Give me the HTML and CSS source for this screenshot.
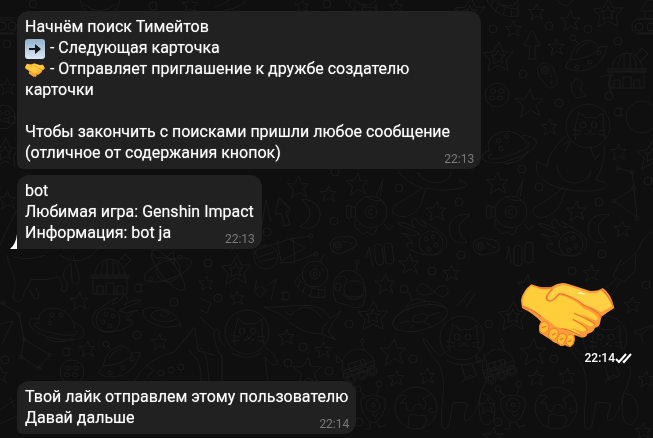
FILE: index.html
```html
<!DOCTYPE html>
<html lang="ru">
<head>
<meta charset="utf-8">
<meta name="viewport" content="width=device-width, initial-scale=1">
<title>bot</title>
<link rel="stylesheet" href="styles.css">
</head>
<body>
<svg class="wallpaper" viewBox="0 0 653 438" preserveAspectRatio="xMinYMin slice" aria-hidden="true">
  <defs>
    <path id="s" vector-effect="non-scaling-stroke" d="M1-10L3-3 10-3 5 2 8 9 1 5-6 10-4 2-10-3-3-3Z"/>
    <g id="d"><path d="M1-15L5-5 15-5 8 3 10 13 0 8-10 14-8 3-15-4-5-5Z"/><path d="M0-7L2-2 7-2 3 1 5 6 0 4-5 7-4 1-7-2-2-2Z"/></g>
    <circle id="c" r="4"/>
    <g id="ufo"><path d="M-15 5Q-12-12 2-15Q12-14 14-6Q4 4-15 5ZM-15 5L-20 12Q-10 19 5 14Q20 6 22-9L14-8M-9-2Q-5-11 4-12"/><circle cx="-8" cy="12" r="2"/><circle cx="5" cy="7" r="2"/><circle cx="14" cy="-2" r="2"/><circle cx="-12" cy="-17" r="3"/><path d="M-10-15L-6-11"/></g>
    <g id="obs"><path d="M-17 2H17V19H-17ZM-19 0H19V3H-19ZM-15 0C-14-21 14-21 15 0M-9 0C-9-9-6-16 0-16C6-16 9-9 9 0M-3 0V-16M3 0V-16M-13 19V11H-7V19M-4 19V8H4V19M7 19V11H13V19M8-13L15-21 21-15 14-8"/></g>
    <g id="bean"><path d="M-8-10C-1-16 7-8 7-1C12 6 8 12 3 13C-2 13-3 7-8 3C-12-1-11-7-8-10Z"/><circle cx="-3" cy="-5" r="4"/><circle cx="-3" cy="-5" r="2"/><path d="M4-1Q1 1 4 3M4 5Q1 7 4 9"/></g>
    <g id="moonrock"><circle r="12"/><ellipse cx="-4" cy="-4" rx="3" ry="2"/><ellipse cx="4" cy="-4" rx="3" ry="2"/><ellipse cx="-5" cy="3" rx="3" ry="2"/><ellipse cx="3" cy="3" rx="3" ry="2"/></g>
    <g id="cat"><circle r="22"/><path d="M-12 14C-15 4-11-5-9-14L-2-8Q3-9 8-8L15-13Q14 1 17 13"/><circle cx="-5" cy="-1" r="3"/><circle cx="6" cy="-1" r="3"/><path d="M0 4L2 6 4 4M2 6Q-1 10-3 7M2 6Q5 10 7 7M-7 5L-16 3M-7 8L-16 9M10 5L18 4M10 8L18 10"/></g>
    <g id="standing"><use href="#cat"/><path d="M-18 14Q-21 24-35 3Q-41-2-37 6Q-31 18-22 28C-14 50-23 67-20 89Q-16 94-13 87L-9 65Q2 63 6 67Q-1 83 5 83Q14 78 19 55Q31 33 21 15M-15 23Q2 31 19 22M-1 26L4 42 15 37 10 26M0 45Q2 39 10 37M18 58C13 96 32 91 33 74C33 61 26 55 18 55"/></g>
    <g id="planet"><path d="M-18-3C-19-20 15-20 18 6M-18-4C-37-7-27 12-3 15C22 21 35 13 22 2L18-1M-17 0C-29-1-20 8-3 10C13 15 25 11 18 7M-12 15Q4 23 16 15"/><circle cx="-5" cy="-8" r="2"/><circle cx="4" cy="-8" r="2"/><circle cx="-7" cy="0" r="2"/></g>
    <g id="robot"><circle r="16"/><circle r="6"/><path d="M2-2Q-3-3-3 1Q0 4 2 2M-16-5H-20V5H-16M-20-6H-25L-24 6H-20M5-16L12-32 9-15M-6-16Q5-9 11-12M-15 7Q-19 16-12 18Q-10 24-4 20Q3 27 6 16M13 12L18 18 22 14"/></g>
    <g id="comet"><path d="M-5-7C-17-14-24-14-27-18C-17-19-13-14-10-13Q-17-20-10-23Q-4-14 2-14Q0-19-4-21Q12-12 18-7C26 2 20 12 9 14C-5 15-21 8-18 2L-12 2Q-19-7-24-8L-13-5Z"/><circle cx="6" cy="2" r="12"/><circle cx="1" cy="-2" r="2"/><circle cx="8" cy="-4" r="2"/><circle cx="11" cy="4" r="2"/><circle cx="4" cy="8" r="2"/></g>
    <path id="moon" d="M11-14C-18-19-15 20 8 13Q-9-2 11-14Z"/>
    <path id="arrow" d="M0-15L8 0 3 1 3 14-3 14-2 1-8 0Z"/>
    <g id="helmet"><path d="M-15 10C-22-22 16-25 17 7L14 20Q5 24-2 19L-13 16Z"/><rect x="-5" y="-5" width="20" height="16" rx="7"/><ellipse cx="-11" cy="1" rx="3" ry="4"/><path d="M8-15V-22M-6 8Q3 19 15 9M-14-8Q-3-13-2-5"/><circle cx="8" cy="-24" r="2"/></g>
    <g id="alien"><circle r="13"/><circle r="5"/><circle r="2"/><path d="M-12-2L-21 8Q-9 27 10 23L10 12M-16 5Q-8 16 10 16M-15 7L-17 14M-10 13L-13 19M-3 15L-5 22M4 17L3 23M5-12L9-20M0-8V-9M7-4L9-5"/></g>
    <g id="rover"><path d="M-15 8C-20-9-1-20 10-10Q18-5 16 5L-14 15ZM-15 8L15-2M-15 11L16 2M-10 1L6-4 8 2-8 8ZM-4-1L-2 6M2-3L4 4M7-11L4-20M-16-2L-22-8-21 0Z"/><circle cx="-7" cy="16" r="5"/><circle cx="4" cy="12" r="5"/><circle cx="14" cy="8" r="5"/><circle cx="-7" cy="16" r="3"/><circle cx="4" cy="12" r="3"/><circle cx="14" cy="8" r="3"/><circle cx="4" cy="-22" r="2"/></g>
    <g id="martian"><path d="M-12-6Q0-14 12-6C14 4 7 16 1 18C-8 16-13 5-12-6ZM-3 17L-3 24-9 24M3 17L6 22 13 20M-8-9L-13-14M4-11L6-18M-1 9Q3 14 5 8"/><circle r="7"/><circle r="2"/><circle cx="-15" cy="-16" r="3"/><circle cx="6" cy="-21" r="3"/></g>
    <g id="earth"><circle r="21"/><path d="M-16-12Q-8-15-10-10L-16-5-10-5-9 1Q-3 7-2-2Q4-6 6-1Q9 4 10-5L7-9 15-14M-8 18L-7 8Q-3 4 2 8L9 7 11 13 7 19M16 0Q11 0 15 5L20 3"/></g>
    <g id="saucer"><ellipse rx="28" ry="12" transform="rotate(-14)"/><ellipse rx="8" ry="4" transform="rotate(-14)"/><path d="M-26 3C-19-15 18-25 27-8M-14-10Q-10-20 0-19Q8-18 12-13M-8-18L-11-26M-20 5L-10 3M8-2L20-6M-7 7L-9 10M4 4L10 7"/></g>
    <g id="shuttle"><path d="M-46-15C-22-14-5-20 9-14Q18-10 20-3L31-11 22 2 18 10 26 18 12 12C-12 12-20-1-30-8ZM-13-12Q-1-21 12-4M-25-11Q-19-3-16-11M18 0Q11 5 13 12"/></g>
  </defs>
  <g class="doodles">
    <use href="#s" transform="translate(536 12) scale(.8)"/><use href="#s" transform="translate(570 21)"/><use href="#s" transform="translate(513 29) scale(.8)"/><use href="#s" transform="translate(556 47) scale(.8)"/><use href="#s" transform="translate(529 103) scale(1.4)"/><use href="#s" transform="translate(549 127) scale(.8)"/><use href="#s" transform="translate(497 183) scale(1.1)"/><use href="#s" transform="translate(618 152) scale(.8)"/><use href="#s" transform="translate(576 211)"/><use href="#s" transform="translate(622 229) scale(.8)"/>
    <use href="#s" transform="translate(298 187) scale(1.1)"/><use href="#s" transform="translate(328 194) scale(.8)"/><use href="#s" transform="translate(357 184) scale(1.1)"/><use href="#s" transform="translate(436 211)"/><use href="#s" transform="translate(409 264)"/><use href="#s" transform="translate(451 273) scale(.8)"/><use href="#s" transform="translate(385 284)"/>
    <use href="#s" transform="translate(79 301) scale(.9)"/><use href="#s" transform="translate(87 349) scale(.8)"/><use href="#s" transform="translate(159 342) scale(.8)"/><use href="#s" transform="translate(206 283) scale(.7)"/><use href="#s" transform="translate(237 298) scale(.7)"/><use href="#s" transform="translate(286 337) scale(.8)"/><use href="#s" transform="translate(323 350) scale(.8)"/><use href="#s" transform="translate(307 371) scale(1.4)"/><use href="#s" transform="translate(393 352) scale(1.3)"/><use href="#s" transform="translate(396 378) scale(.8)"/><use href="#s" transform="translate(427 376) scale(.8)"/>
    <use href="#s" transform="translate(533 352) scale(1.3)"/><use href="#s" transform="translate(536 378) scale(.8)"/><use href="#s" transform="translate(567 376) scale(.8)"/><use href="#s" transform="translate(646 379) scale(.8)"/><use href="#s" transform="translate(487 406) scale(.8)"/><use href="#s" transform="translate(643 431) scale(.8)"/><use href="#s" transform="translate(493 437)"/><use href="#s" transform="translate(591 273) scale(.8)"/><use href="#s" transform="translate(527 285)"/><use href="#s" transform="translate(632 305) scale(.8)"/>
    <use href="#s" transform="translate(7 87) scale(.8)"/><use href="#s" transform="translate(7 200) scale(.9)"/><use href="#s" transform="translate(302 6) scale(.7)"/><use href="#s" transform="translate(396 7) scale(.7)"/><use href="#s" transform="translate(190 5) scale(.8)"/><use href="#s" transform="translate(0 375) scale(.8)"/>
    <use href="#d" x="608" y="13"/><use href="#d" x="498" y="57"/><use href="#d" x="652" y="155"/><use href="#d" x="236" y="270"/><use href="#d" x="373" y="316"/><use href="#d" x="513" y="316"/><use href="#d" x="5" y="153"/><use href="#d" x="470" y="12"/>
    <use href="#c" x="493" y="29"/><use href="#c" x="549" y="26"/><use href="#c" x="588" y="29"/><use href="#c" x="618" y="41"/><use href="#c" x="523" y="74"/><use href="#c" x="559" y="103"/><use href="#c" x="609" y="96"/><use href="#c" x="618" y="112"/><use href="#c" x="522" y="169"/><use href="#c" x="539" y="187"/><use href="#c" x="648" y="181"/><use href="#c" x="599" y="202"/><use href="#c" x="602" y="254"/>
    <use href="#c" x="335" y="172"/><use href="#c" x="399" y="188"/><use href="#c" x="334" y="221"/><use href="#c" x="459" y="202"/><use href="#c" x="461" y="255"/><use href="#c" x="432" y="271"/><use href="#c" x="404" y="289"/><use href="#c" x="286" y="296"/><use href="#c" x="138" y="288"/><use href="#c" x="174" y="302"/><use href="#c" x="137" y="335"/><use href="#c" x="66" y="352"/><use href="#c" x="5" y="360"/><use href="#c" x="208" y="263"/><use href="#c" x="218" y="298"/><use href="#c" x="349" y="324"/><use href="#c" x="303" y="347"/><use href="#c" x="288" y="363"/><use href="#c" x="329" y="371"/><use href="#c" x="413" y="359"/><use href="#c" x="489" y="324"/><use href="#c" x="554" y="359"/><use href="#c" x="498" y="422"/><use href="#c" x="359" y="422"/><use href="#c" x="572" y="271"/><use href="#c" x="646" y="285"/><use href="#c" x="7" y="44"/><use href="#c" x="12" y="120"/><use href="#c" x="33" y="4"/><use href="#c" x="153" y="6"/><use href="#c" x="327" y="4"/><use href="#c" x="267" y="232"/>
    <use href="#arrow" x="532" y="45"/><use href="#arrow" transform="translate(283 212) rotate(-17)"/>
    <use href="#ufo" x="585" y="55"/><use href="#ufo" x="118" y="361"/><use href="#obs" x="627" y="69"/><use href="#obs" x="110" y="275"/>
    <use href="#bean" x="548" y="75"/><use href="#bean" transform="translate(343 244) rotate(-75)"/><use href="#bean" transform="translate(486 246) rotate(-60)"/>
    <use href="#moonrock" x="497" y="95"/><use href="#moonrock" x="72" y="372"/><use href="#moonrock" x="3" y="117"/>
    <use href="#cat" x="588" y="126"/><path d="M567 135Q549 150 547 166L537 162C533 177 549 190 582 191C602 192 613 186 604 182L596 180Q606 162 604 145M557 165C559 189 587 187 591 171M564 187Q550 199 534 208C528 221 553 222 561 202L567 188M563 145L570 141 565 153M590 146L595 160 600 153"/>
    <use href="#planet" transform="translate(507 145) rotate(-30)"/><use href="#planet" x="57" y="323"/>
    <use href="#robot" x="511" y="212"/><use href="#robot" x="371" y="212"/><use href="#moon" x="598" y="229"/><use href="#moon" x="459" y="229"/><use href="#moon" transform="translate(310 215) scale(-1 1) rotate(-10)"/>
    <use href="#comet" x="565" y="242"/><use href="#comet" x="425" y="241"/><use href="#comet" transform="translate(114 318) scale(-1 1)"/>
    <path d="M397 170Q409 185 423 188Q409 197 394 206C387 218 413 223 421 204L426 188Q447 193 465 187Q471 184 459 180M417 172Q425 185 442 182Q451 178 451 172"/>
    <path d="M618 168L632 172 634 188 614 201 637 217 634 188"/><circle cx="618" cy="168" r="2"/><circle cx="632" cy="172" r="2"/><circle cx="634" cy="188" r="2"/><circle cx="614" cy="201" r="2"/><circle cx="637" cy="218" r="2"/>
    <path d="M0 302L19 314 24 339 21 357 39 368 50 355 24 339M0 324L13 321 2 344"/><circle cx="3" cy="303" r="2"/><circle cx="19" cy="314" r="2"/><circle cx="24" cy="339" r="2"/><circle cx="21" cy="357" r="2"/><circle cx="39" cy="368" r="2"/><circle cx="50" cy="355" r="2"/>
    <path d="M7 255C10 271 19 279 13 295C14 305 22 304 24 293L31 279Q53 281 57 276Q64 283 61 290Q68 296 67 282Q58 274 71 263L72 281Q80 289 79 276L73 255M29 289L35 299Q42 299 36 288M13 257Q29 261 45 255"/>
    <circle cx="168" cy="270" r="12"/><ellipse cx="168" cy="270" rx="25" ry="9" transform="rotate(-20 168 270)"/><ellipse cx="168" cy="270" rx="25" ry="8" transform="rotate(52 168 270)"/><circle cx="151" cy="279" r="2"/><circle cx="180" cy="257" r="2"/>
    <path d="M180 324C167 333 137 321 144 309C155 303 181 312 181 328M176 319C164 326 145 318 153 312Q161 308 169 313Q168 319 160 315"/>
    <path d="M134 381Q147 358 174 352L195 328 198 351 215 355M146 365L154 370 147 377M175 351L194 327M189 350Q203 364 201 381"/><circle cx="161" cy="373" r="3"/><circle cx="171" cy="370" r="3"/><circle cx="181" cy="367" r="3"/>
    <circle cx="266" cy="257" r="12"/><path d="M256 250L293 238 295 262 279 263M277 240L281 261 305 248 289 239M292 239L309 236M294 262L315 254M259 257L274 252M258 262L276 258"/><circle cx="311" cy="236" r="2"/><circle cx="316" cy="254" r="2"/>
    <rect x="375" y="244" width="8" height="21" rx="4" transform="rotate(-7 379 254)"/><rect x="385" y="243" width="8" height="21" rx="4" transform="rotate(-7 389 254)"/><path d="M366 258L369 247 373 267"/>
    <rect x="514" y="245" width="8" height="21" rx="4"/><rect x="525" y="242" width="8" height="21" rx="4"/><path d="M506 260L509 247 511 263"/>
    <use href="#alien" x="315" y="274"/><use href="#helmet" x="349" y="286"/><path d="M421 284C409 292 426 301 436 290C445 279 454 293 443 297C434 295 428 282 421 284"/>
    <path d="M257 280L254 291 260 298 266 290 260 286 254 291M268 285L276 279 271 300M600 77L613 74 608 83 612 95M571 84L577 78 583 83 580 89 586 96 577 98 572 92Z"/>
    <use href="#cat" x="247" y="332"/><path d="M225 346Q218 342 219 331Q215 327 214 333Q214 346 222 356V390M265 347Q275 353 278 364Q272 368 265 357L269 390M232 353Q247 362 261 353M200 317L215 331M200 348Q207 348 209 381M200 298L211 303 207 313 200 310"/>
    <use href="#shuttle" x="310" y="322"/><use href="#rover" x="358" y="363"/><use href="#rover" x="498" y="363"/><use href="#saucer" x="420" y="318"/>
    <use href="#standing" x="462" y="338"/><use href="#standing" x="605" y="338"/><use href="#earth" x="416" y="408"/><use href="#earth" x="556" y="408"/><use href="#martian" x="373" y="405"/><use href="#martian" x="513" y="405"/>
    <path d="M620 266Q637 256 643 240Q651 232 653 232M621 260L613 276 624 282 635 271 636 254M616 279L605 289M620 282L609 300M633 332L653 325M633 332L641 335 653 325M641 335L643 343M457 306L471 290M466 307L475 293"/>
    <circle cx="642" cy="117" r="16"/><path d="M640 11L647 0H653M640 11H653M645 12V19M637 19H653M637 33H653"/><rect x="632" y="19" width="30" height="15" rx="7"/><circle cx="639" cy="27" r="4"/><circle cx="651" cy="27" r="4"/>
    <use href="#alien" x="508" y="-7"/><use href="#alien" x="366" y="-8"/><circle cx="100" cy="-3" r="20"/><path d="M83 4Q100 17 116 4M215 8L230 0M225 10Q240 8 247 0M0 18H17M0 34H17M557 0Q566 11 573 0"/><rect x="-8" y="20" width="24" height="13" rx="6"/><circle cx="2" cy="26" r="4"/><circle cx="12" cy="26" r="4"/>
    <path d="M262 225L266 200 271 222M0 245Q12 218 17 210M60 255Q80 269 98 249M152 252L156 258 167 257 173 251 175 266M230 252C241 239 255 247 258 259M0 410L15 400M0 424L17 416M10 398L15 408"/>
  </g>
</svg>

<svg class="sprite" aria-hidden="true">
  <symbol id="handshake" viewBox="45 50 285 195">
    <path fill="#ff9b38" d="M48 105Q54 75 79 57L102 64Q122 67 140 64Q164 48 190 56L256 77Q280 78 293 68Q318 84 328 128Q307 141 289 154L285 174Q281 187 270 187Q265 202 248 205Q242 219 227 216L208 209Q213 238 196 244Q186 245 180 239Q169 247 158 235Q144 232 137 223Q118 211 104 202Q98 180 108 169Q84 143 51 128Z"/>
    <path fill="#ffce3a" d="M53 104Q62 72 79 62L103 70Q120 75 137 70L125 93Q122 109 137 108Q153 102 163 88Q207 98 238 131Q261 137 277 155Q281 169 267 164L224 144Q250 164 268 175Q260 188 247 180L219 165L243 185Q248 197 236 199L195 187L225 204Q221 211 209 206L182 194L151 183Q123 160 104 148Q82 134 54 119Z"/>
    <path fill="#ffd044" d="M143 73Q163 55 189 61L254 84Q280 85 291 73Q314 92 322 123L288 141Q267 126 240 119Q196 97 176 83Q160 83 150 98Q136 109 129 100Q129 87 143 73Z"/>
    <g fill="#ffbe32" stroke="#f47b32" stroke-width="3">
      <path d="M108 173Q116 165 127 172Q135 183 130 194Q123 207 111 204Q101 196 105 181Z"/>
      <path d="M140 191Q153 184 160 198Q160 216 147 225Q133 223 130 212Q130 198 140 191Z"/>
      <path d="M169 204Q182 202 184 216Q180 237 166 240Q153 231 158 216Q162 207 169 204Z"/>
      <path d="M192 207Q207 204 208 222Q205 241 194 244Q181 237 183 224Q185 211 192 207Z"/>
    </g>
    <path fill="none" stroke="#ef782f" stroke-width="4" stroke-linecap="round" d="M102 66Q118 71 140 67M142 72Q118 94 126 104Q141 115 162 85Q203 91 238 121Q282 139 288 155M208 144Q254 163 270 177M204 163Q231 174 247 192M171 190Q201 195 226 212M290 73Q312 92 325 124M53 124Q82 131 107 153M112 187L122 183M143 209L150 204M166 223L174 219M191 229L198 225"/>
    <path fill="none" stroke="#fff1aa" stroke-width="5" stroke-linecap="round" d="M222 82L237 86"/>
  </symbol>
</svg>

<main class="chat">
  <article class="bubble">
    <p>Начнём поиск Тимейтов<br>
    <svg class="emoji" viewBox="0 0 20 20" role="img" aria-label="➡️"><defs><linearGradient id="key" x2="0" y2="1"><stop stop-color="#91b2ca"/><stop offset="1" stop-color="#dce8f6"/></linearGradient></defs><rect width="20" height="20" rx="3" fill="url(#key)"/><path d="M4 9H10V5L16 10 10 15V11H4Z" fill="#15171a"/></svg> - Следующая карточка<br>
    <svg class="emoji" role="img" aria-label="🤝"><use href="#handshake"/></svg> - Отправляет приглашение к дружбе создателю карточки</p>
    <p class="next">Чтобы закончить с поисками пришли любое сообщение (отличное от содержания кнопок)<time>22:13</time></p>
  </article>

  <article class="bubble last">
    <svg class="tail" viewBox="0 0 7 15" aria-hidden="true"><path d="M7 0Q6 10 0 15H7Z" fill="#fff"/></svg>
    <p>bot<br>Любимая игра: Genshin Impact<br>Информация: bot ja<time>22:13</time></p>
  </article>

  <article class="sticker">
    <svg class="hands" role="img" aria-label="🤝"><use href="#handshake"/></svg>
    <div class="status"><time>22:14</time><svg class="ticks" viewBox="0 0 17 12" aria-hidden="true"><path d="M1 7L4 10 11 2M8 9L9 10 16 2"/></svg></div>
  </article>

  <article class="bubble">
    <p>Твой лайк отправлем этому пользователю<br>Давай дальше<time>22:14</time></p>
  </article>
</main>
</body>
</html>
```
FILE: styles.css
```css
* { box-sizing: border-box; }

body {
  margin: 0;
  min-height: 100vh;
  background: #0f0f0f;
  color: #fff;
  font: 16px/21px Roboto, "Noto Sans", sans-serif;
  overflow-x: hidden;
}

.wallpaper {
  position: fixed;
  inset: 0;
  z-index: -1;
  width: 100%;
  height: 100%;
}

.doodles {
  fill: none;
  stroke: #1c1c1c;
  stroke-width: 1;
  stroke-linejoin: round;
}

.sprite {
  position: absolute;
  width: 0;
  height: 0;
}

.chat {
  display: flex;
  flex-direction: column;
  align-items: flex-start;
  gap: 6px;
  padding: 11px 17px 4px;
}

.bubble {
  position: relative;
  max-width: 75%;
  padding: 5px 8px 6px;
  border-radius: 12px 12px 12px 6px;
  background: #212121;
}

.bubble.last { border-bottom-left-radius: 0; }

.bubble p {
  margin: 0;
  text-shadow: 0 0 1px #ffffff80;
}

.bubble .next { margin-top: 21px; }

time {
  font-size: 12px;
  line-height: 16px;
}

.bubble time {
  float: right;
  margin: 9px -1px -4px 8px;
  color: #797979;
  text-shadow: none;
}

.emoji {
  width: 20px;
  height: 20px;
  vertical-align: -3px;
  margin: -3px 1px -3px 0;
}

.tail {
  position: absolute;
  right: 100%;
  bottom: 0;
  width: 7px;
  height: 15px;
}

.sticker {
  align-self: flex-end;
  display: flex;
  flex-direction: column;
  padding: 27px 0 9px;
}

.hands {
  width: 95px;
  height: 65px;
}

.status {
  display: flex;
  align-items: center;
  align-self: flex-end;
  margin: 3px 0 0 65px;
  padding-right: 4px;
  border-radius: 8px;
  background: #0f0f0fcc;
}

.status time { font-weight: 500; }

.ticks {
  width: 17px;
  height: 12px;
  fill: none;
  stroke: #fff;
  stroke-width: 2;
}
```
